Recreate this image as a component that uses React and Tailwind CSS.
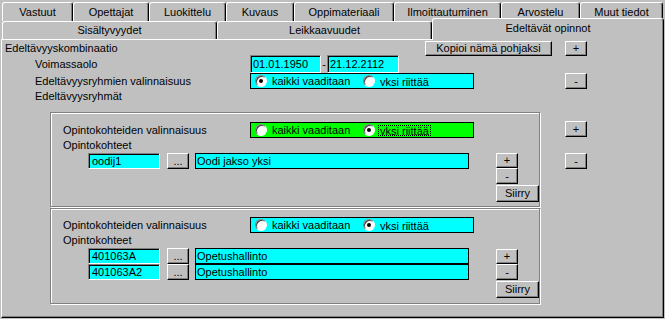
import React from "react";

const raised =
  "bg-[#c0c0c0] border border-t-white border-l-white border-r-black border-b-black shadow-[inset_-1px_-1px_0_#808080]";
const sunken =
  "border border-t-[#808080] border-l-[#808080] border-r-white border-b-white shadow-[inset_1px_1px_0_#000]";

function Btn({ className = "", children }) {
  return (
    <div className={`flex items-center justify-center ${raised} ${className}`}>
      {children}
    </div>
  );
}

function Tab({ className = "", children }) {
  return (
    <div
      className={`flex items-center justify-center bg-[#c0c0c0] border-t border-l border-r border-t-white border-l-white border-r-black rounded-t-[3px] shadow-[inset_-1px_0_0_#808080] ${className}`}
    >
      {children}
    </div>
  );
}

function Radio({ checked }) {
  return (
    <span className="w-[12px] h-[12px] shrink-0 rounded-full bg-white border border-t-[#808080] border-l-[#808080] border-r-white border-b-white shadow-[inset_1px_1px_0_#404040] flex items-center justify-center">
      {checked && <span className="w-[4px] h-[4px] rounded-full bg-black" />}
    </span>
  );
}

function RadioBox({ bg, focus = false, first = false }) {
  return (
    <div className={`w-[224px] h-[16px] border border-black flex items-center ${bg}`}>
      <div className="w-[112px] pl-[4px] flex items-center gap-[5px]">
        <Radio checked={first} />
        <span className="h-[10px] leading-[11px] overflow-hidden">kaikki vaaditaan</span>
      </div>
      <div className="flex items-center gap-[3px]">
        <Radio checked={!first} />
        <span
          className={`h-[11px] leading-[11px] overflow-hidden px-[1px] ${
            focus ? "border border-dotted border-black" : "border border-transparent"
          }`}
        >
          yksi riittää
        </span>
      </div>
    </div>
  );
}

function CourseRow({ code, name }) {
  return (
    <div className="flex items-center h-[16px]">
      <div className={`w-[72px] h-[16px] bg-[#00ffff] pl-[3px] flex items-center ${sunken}`}>
        {code}
      </div>
      <Btn className="ml-[7px] w-[22px] h-[16px]">...</Btn>
      <div className="ml-[6px] w-[274px] h-[16px] bg-[#00ffff] border border-black pl-[1px] flex items-center">
        {name}
      </div>
    </div>
  );
}

function Group({ className, bg, focus, first, rows, btnTop = "" }) {
  return (
    <div
      className={`w-[490px] border border-[#808080] shadow-[inset_1px_1px_0_#fff,1px_1px_0_#fff] pl-[12px] ${className}`}
    >
      <div className="flex items-center h-[16px]">
        <span className="w-[187px]">Opintokohteiden valinnaisuus</span>
        <RadioBox bg={bg} focus={focus} first={first} />
      </div>
      <div className="h-[15px] flex items-center">Opintokohteet</div>
      <div className="flex ml-[25px]">
        <div className="flex flex-col">
          {rows.map((r) => (
            <CourseRow key={r.code} code={r.code} name={r.name} />
          ))}
        </div>
        <div className={`ml-[27px] flex flex-col ${btnTop}`}>
          <Btn className="w-[22px] h-[15px]">+</Btn>
          <Btn className="w-[22px] h-[16px]">-</Btn>
          <Btn className="mt-[1px] w-[43px] h-[17px]">Siirry</Btn>
        </div>
      </div>
    </div>
  );
}

export default function App() {
  return (
    <div className="w-[665px] h-[319px] overflow-hidden bg-[#c0c0c0] text-black text-[11px] leading-none font-['Liberation_Sans',Arial,sans-serif]">
      {/* tabs */}
      <div className="relative z-10">
        <div className="flex pt-[2px] pl-[2px]">
          <Tab className="w-[71px] h-[19px]">Vastuut</Tab>
          <Tab className="w-[76px] h-[19px]">Opettajat</Tab>
          <Tab className="w-[77px] h-[19px]">Luokittelu</Tab>
          <Tab className="w-[68px] h-[19px]">Kuvaus</Tab>
          <Tab className="w-[100px] h-[19px]">Oppimateriaali</Tab>
          <Tab className="w-[107px] h-[19px]">Ilmoittautuminen</Tab>
          <Tab className="w-[79px] h-[19px]">Arvostelu</Tab>
          <Tab className="w-[83px] h-[19px]">Muut tiedot</Tab>
        </div>
        <div className="flex items-start pl-[2px] h-[18px]">
          <Tab className="w-[215px] h-[18px]">Sisältyvyydet</Tab>
          <Tab className="w-[215px] h-[18px]">Leikkaavuudet</Tab>
          <Tab className="w-[232px] h-[22px] -mt-[3px] pb-[3px]">Edeltävät opinnot</Tab>
        </div>
      </div>

      {/* panel */}
      <div className="ml-[1px] w-[663px] h-[279px] border-t border-l border-r border-b border-t-white border-l-white border-r-black border-b-black shadow-[inset_-1px_-1px_0_#808080]">
        <div className="flex items-start h-[14px] mt-[1px]">
          <span className="w-[248px] pl-[3px] h-[14px] flex items-center">Edeltävyyskombinaatio</span>
          <Btn className="ml-[175px] w-[127px] h-[15px]">Kopioi nämä pohjaksi</Btn>
          <Btn className="ml-[13px] w-[22px] h-[15px]">+</Btn>
        </div>
        <div className="flex items-center h-[18px]">
          <span className="w-[248px] pl-[33px]">Voimassaolo</span>
          <div className={`w-[71px] h-[18px] bg-[#00ffff] pl-[2px] flex items-center ${sunken}`}>01.01.1950</div>
          <span className="w-[6px] text-center">-</span>
          <div className={`w-[72px] h-[18px] bg-[#00ffff] pl-[2px] flex items-center ${sunken}`}>21.12.2112</div>
        </div>
        <div className="flex items-center h-[16px]">
          <span className="w-[248px] pl-[33px]">Edeltävyysryhmien valinnaisuus</span>
          <RadioBox bg="bg-[#00ffff]" first />
          <Btn className="ml-[91px] w-[22px] h-[16px]">-</Btn>
        </div>
        <div className="flex items-center h-[15px]">
          <span className="pl-[33px]">Edeltävyysryhmät</span>
        </div>

        <div className="flex mt-[8px] pl-[48px]">
          <div className="flex flex-col">
            <Group
              className="h-[95px] pt-[9px]"
              bg="bg-[#00ff00]"
              focus
              rows={[{ code: "oodij1", name: "Oodi jakso yksi" }]}
            />
            <Group
              className="mt-[1px] h-[96px] pt-[8px]"
              bg="bg-[#00ffff]"
              rows={[
                { code: "401063A", name: "Opetushallinto" },
                { code: "401063A2", name: "Opetushallinto" },
              ]}
              btnTop="mt-[1px]"
            />
          </div>
          <div className="ml-[25px] flex flex-col">
            <Btn className="mt-[9px] w-[22px] h-[16px]">+</Btn>
            <Btn className="mt-[16px] w-[22px] h-[16px]">-</Btn>
          </div>
        </div>
      </div>
    </div>
  );
}
